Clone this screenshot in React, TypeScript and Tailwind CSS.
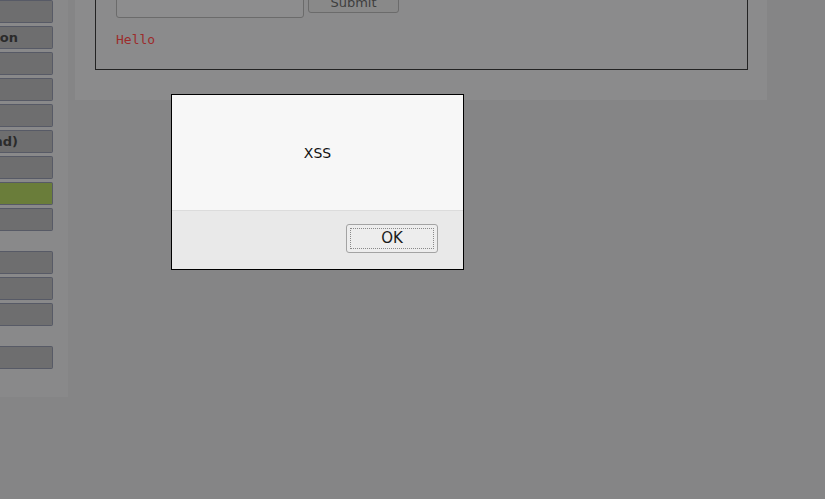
import React from "react";

const groups: { label?: string; active?: boolean }[][] = [
  [
    {},
    { label: "Command Injection" },
    {},
    {},
    {},
    { label: "SQL Injection (Blind)" },
    {},
    { active: true },
    {},
  ],
  [{}, {}, {}],
  [{}],
];

const MenuButton = ({ label, active }: { label?: string; active?: boolean }) => (
  <div
    className={
      "flex h-[23px] w-[53px] items-center justify-end overflow-hidden whitespace-nowrap rounded-r-[2px] border border-l-0 border-[#575a66] pr-[34px] text-[13px] font-bold text-[#2b2b2b] " +
      (active ? "bg-[#6a7d3a]" : "bg-[#6e6e6f]")
    }
    style={{ fontFamily: '"DejaVu Sans", sans-serif' }}
  >
    {label}
  </div>
);

export default function App() {
  return (
    <div className="relative h-[499px] w-[825px] overflow-hidden bg-[#858586]">
      <div className="flex items-start">
        {/* sidebar */}
        <div className="flex h-[397px] w-[68px] flex-col gap-[20px] bg-[#89898a]">
          {groups.map((g, i) => (
            <div key={i} className="flex flex-col gap-[3px]">
              {g.map((b, j) => (
                <MenuButton key={j} {...b} />
              ))}
            </div>
          ))}
        </div>

        {/* main panel */}
        <div className="ml-[7px] h-[100px] w-[692px] bg-[#8b8b8c] pl-[20px]">
          <div className="flex h-[70px] w-[653px] flex-col border border-t-0 border-[#232323] pl-[20px]">
            <div className="-mt-[9px] flex items-start gap-[4px]">
              <div className="h-[27px] w-[188px] rounded-[3px] border border-[#6b6b6b] bg-[#8d8d8e]" />
              <div
                className="flex h-[22px] w-[91px] items-end justify-center rounded-[3px] border border-[#6b6b6b] bg-[#898989] pb-[2px] text-[13px] leading-[14px] text-[#3e3e3e]"
                style={{ fontFamily: '"DejaVu Sans", sans-serif' }}
              >
                Submit
              </div>
            </div>
            <div
              className="mt-[14px] text-[13px] leading-[16px] text-[#9c2b2b]"
              style={{ fontFamily: '"DejaVu Sans Mono", monospace' }}
            >
              Hello
            </div>
          </div>
        </div>
      </div>

      {/* alert dialog */}
      <div
        className="absolute left-[171px] top-[94px] flex h-[176px] w-[293px] flex-col border border-black bg-[#f7f7f7]"
        style={{ fontFamily: '"DejaVu Sans", sans-serif' }}
      >
        <div className="flex h-[115px] items-center justify-center pt-[1px] text-[14px] text-[#111]">
          XSS
        </div>
        <div className="flex h-[59px] items-start justify-end border-t border-[#dcdcdc] bg-[#e9e9e9] pr-[25px] pt-[13px]">
          <button className="flex h-[29px] w-[92px] items-center justify-center rounded-[3px] border border-[#a3a3a3] bg-[#ededed] p-[3px]">
            <span className="flex h-full w-full items-center justify-center border border-dotted border-[#8a8a8a] text-[15px] text-[#1a1a1a]">
              OK
            </span>
          </button>
        </div>
      </div>
    </div>
  );
}
